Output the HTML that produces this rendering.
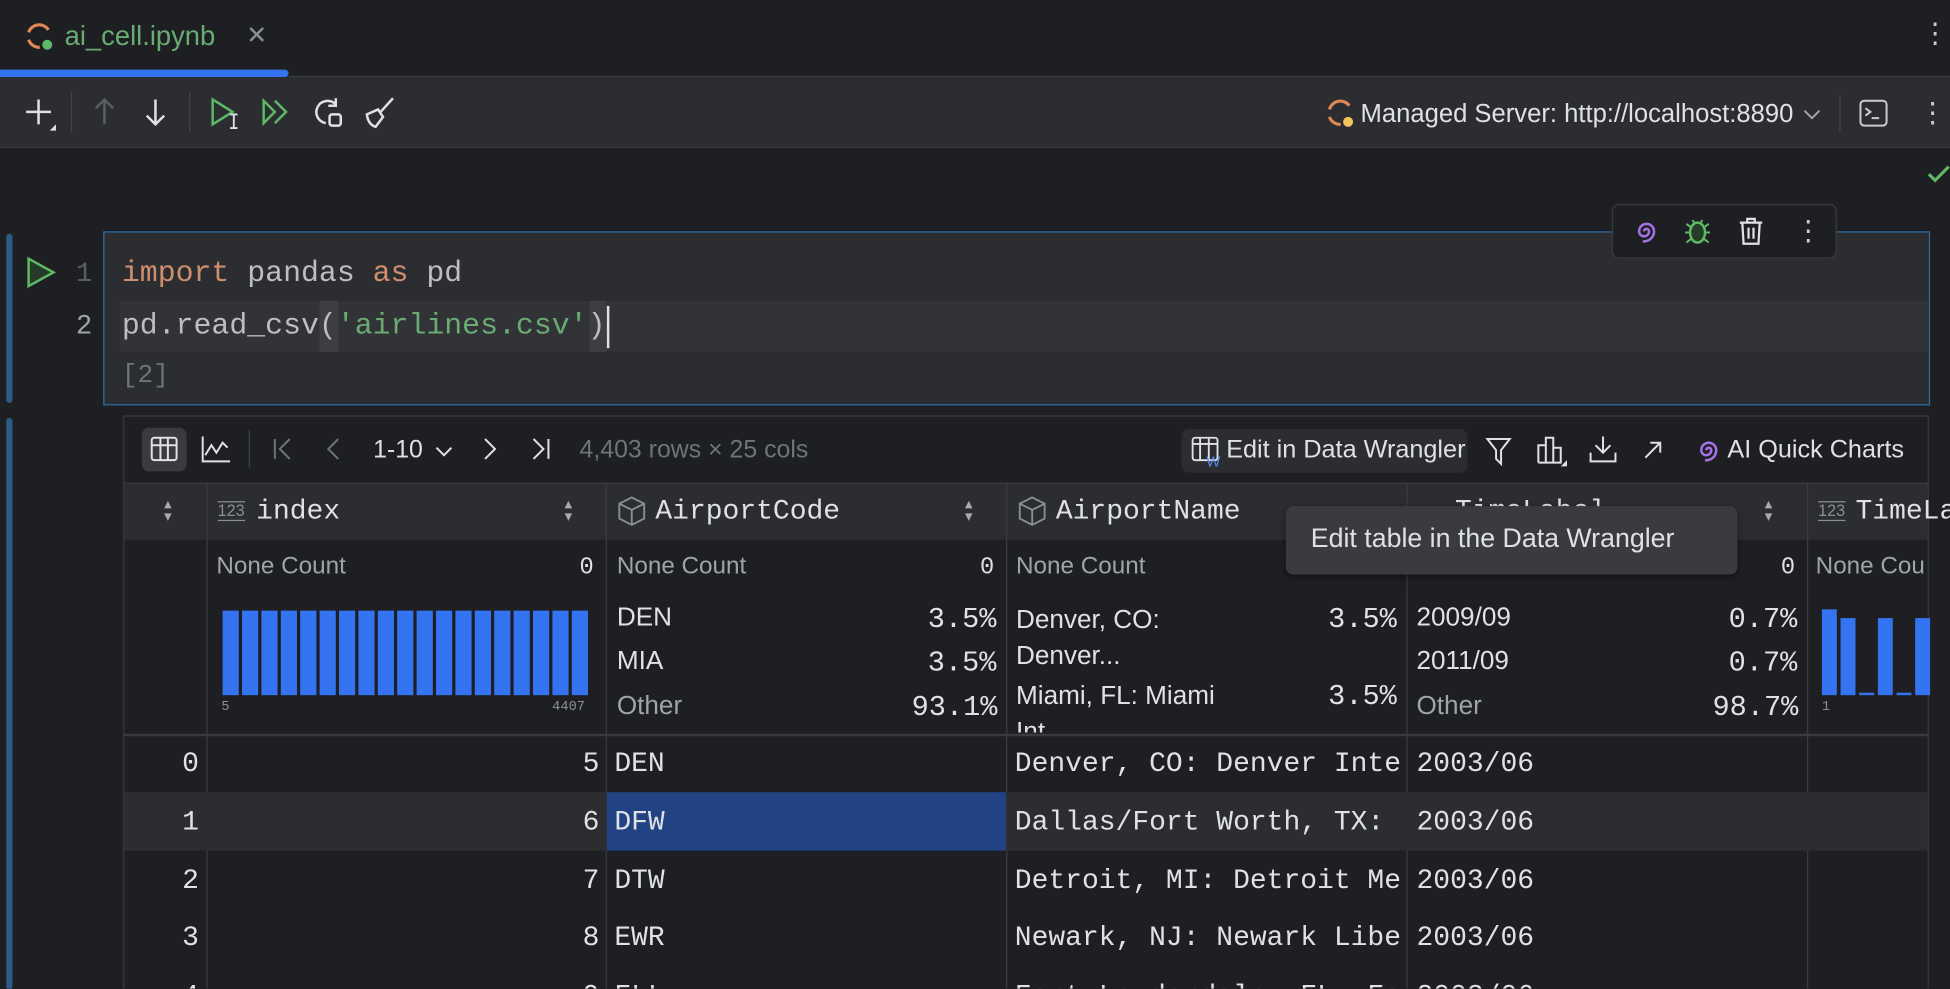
<!DOCTYPE html>
<html><head><meta charset="utf-8"><style>
html,body{margin:0;padding:0;width:1950px;height:988px;overflow:hidden;background:#1e1f22}
#w{position:absolute;left:0;top:0;width:1568px;height:795px;transform:scale(1.24362);transform-origin:0 0;font-family:"Liberation Sans",sans-serif;color:#dfe1e5;background:#1e1f22;overflow:hidden}
.a{position:absolute;white-space:nowrap}
.m{font-family:"Liberation Mono",monospace}
.t{font-size:22.5px}
svg{position:absolute;overflow:visible}
.vl{position:absolute;width:1px;background:#393b40}
.hl{position:absolute;height:1px;background:#393b40}
</style></head><body><div id="w">
<!-- tab bar -->
<svg style="left:20px;top:18px" width="24" height="24" viewBox="0 0 24 24"><path d="M19 6 A9 9 0 0 0 3 8" fill="none" stroke="#e08855" stroke-width="2.5"/><path d="M3 14 A9 9 0 0 0 12 20" fill="none" stroke="#e08855" stroke-width="2.5"/><circle cx="18" cy="18" r="4" fill="#5fb865"/></svg>
<div class="a" style="left:52px;top:16px;font-size:22px;color:#6aab73">ai_cell.ipynb</div>
<div class="a" style="left:198px;top:16px;font-size:20px;color:#8b8e94">✕</div>
<div class="a" style="left:1545px;top:14px;font-size:22px;color:#ccc">⋮</div>
<div class="a" style="left:0;top:56px;width:232px;height:6px;background:#3574f0;border-radius:0 3px 3px 0"></div>
<div class="hl" style="left:232px;top:61px;width:1336px;background:#393b40"></div>
<!-- toolbar -->
<div class="a" style="left:0;top:62px;width:1568px;height:56px;background:#2b2d30;border-bottom:1px solid #393b40"></div>
<svg style="left:20px;top:78px" width="26" height="26"><path d="M11 2V22M1 12H21" stroke="#dfe1e5" stroke-width="2"/><path d="M25 22L25 27L20 27Z" fill="#dfe1e5"/></svg>
<div class="vl" style="left:57px;top:74px;height:32px;background:#43454a"></div>
<svg style="left:74px;top:78px" width="20" height="24"><path d="M10 2V22M3 9L10 2L17 9" fill="none" stroke="#5a5d63" stroke-width="2"/></svg>
<svg style="left:115px;top:78px" width="20" height="24"><path d="M10 2V22M3 15L10 22L17 15" fill="none" stroke="#dfe1e5" stroke-width="2"/></svg>
<div class="vl" style="left:152px;top:74px;height:32px;background:#43454a"></div>
<svg style="left:169px;top:78px" width="26" height="26"><path d="M2 2L18 12L2 22Z" fill="none" stroke="#5fb865" stroke-width="2"/><path d="M19 14V25M16 14H22M16 25H22" stroke="#dfe1e5" stroke-width="1.5"/></svg>
<svg style="left:210px;top:79px" width="24" height="22"><path d="M2 2L11 11L2 20ZM11 2L20 11L11 20" fill="none" stroke="#5fb865" stroke-width="2"/></svg>
<svg style="left:252px;top:78px" width="26" height="26"><path d="M18 6A9 9 0 1 0 10 21" fill="none" stroke="#dfe1e5" stroke-width="2"/><path d="M18 1V7H12" fill="none" stroke="#dfe1e5" stroke-width="2"/><rect x="13" y="14" width="9" height="9" rx="2" fill="none" stroke="#dfe1e5" stroke-width="2"/></svg>
<svg style="left:292px;top:78px" width="26" height="26"><path d="M24 1L14 12M3 14L12 10L16 16L10 24Q4 22 3 14Z" fill="none" stroke="#dfe1e5" stroke-width="2"/></svg>
<svg style="left:1066px;top:80px" width="24" height="24"><path d="M19 5A9 9 0 0 0 3 8" fill="none" stroke="#e08855" stroke-width="2.5"/><path d="M3 14A9 9 0 0 0 12 20" fill="none" stroke="#e08855" stroke-width="2.5"/><circle cx="18" cy="18" r="4" fill="#f2c55c"/></svg>
<div class="a" style="left:1094px;top:80px;font-size:20.6px">Managed Server: http://localhost:8890</div>
<svg style="left:1450px;top:87px" width="14" height="10"><path d="M1 2L7 8L13 2" fill="none" stroke="#aaa" stroke-width="1.5"/></svg>
<div class="vl" style="left:1479px;top:76px;height:30px;background:#43454a"></div>
<svg style="left:1495px;top:80px" width="24" height="22"><rect x="1" y="1" width="21" height="20" rx="3" fill="none" stroke="#ccc" stroke-width="1.6"/><path d="M5 7L9 10L5 13M10 15H16" fill="none" stroke="#ccc" stroke-width="1.6"/></svg>
<div class="a" style="left:1543px;top:78px;font-size:22px;color:#ccc">⋮</div>
<svg style="left:1550px;top:132px" width="20" height="16"><path d="M1 8L6 13L17 2" fill="none" stroke="#5fb865" stroke-width="2.5"/></svg>
<!-- cell -->
<div class="a" style="left:5px;top:188px;width:5px;height:136px;background:#2e5a88;border-radius:3px"></div>
<div class="a" style="left:83px;top:186px;width:1467px;height:138px;background:#2b2d30;border:1px solid #2e6ca8"></div>
<div class="a" style="left:96px;top:242px;width:1454px;height:41px;background:#313337"></div>
<div class="a" style="left:257px;top:242px;width:15px;height:41px;background:#3c3e43"></div>
<div class="a" style="left:474px;top:242px;width:14px;height:41px;background:#3c3e43"></div>
<svg style="left:21px;top:206px" width="24" height="26"><path d="M2 2L22 13L2 24Z" fill="#253a27" stroke="#5fb865" stroke-width="2"/></svg>
<div class="a m" style="left:61px;top:208px;font-size:22px;color:#5a5d63">1</div>
<div class="a m" style="left:61px;top:250px;font-size:22px;color:#a0a3a8">2</div>
<div class="a m" style="left:98px;top:207px;font-size:24px;color:#bcbec4"><span style="color:#cf8e6d">import</span> pandas <span style="color:#cf8e6d">as</span> pd</div>
<div class="a m" style="left:98px;top:249px;font-size:24px;color:#bcbec4">pd.read_csv(<span style="color:#6aab73">'airlines.csv'</span>)</div>
<div class="a" style="left:488px;top:246px;width:2px;height:34px;background:#dfe1e5"></div>
<div class="a m" style="left:98px;top:291px;font-size:21px;color:#6f737a">[2]</div>
<!-- floating -->
<div class="a" style="left:1296px;top:164px;width:179px;height:42px;background:#1e1f22;border:1.5px solid #393b40;border-radius:6px"></div>
<svg style="left:1313px;top:176px" width="22" height="20"><path d="M11 10m-2 0a2 2 0 1 1 4 0a4 4 0 1 1-8 0a6 6 0 1 1 12 0a8 8 0 0 1-9 8" fill="none" stroke="#a571e6" stroke-width="2"/></svg>
<svg style="left:1353px;top:174px" width="24" height="24"><ellipse cx="12" cy="13" rx="6" ry="8" fill="#253a27" stroke="#5fb865" stroke-width="2"/><path d="M2 13H6M18 13H22M3 6L7 9M21 6L17 9M3 21L7 18M21 21L17 18M8 3L10 6M16 3L14 6" stroke="#5fb865" stroke-width="1.6"/></svg>
<svg style="left:1397px;top:174px" width="22" height="24"><path d="M2 5H20M8 5V2H14V5M4 5L5 22H17L18 5M9 9V18M13 9V18" fill="none" stroke="#dfe1e5" stroke-width="1.8"/></svg>
<div class="a" style="left:1443px;top:173px;font-size:22px;color:#ccc">⋮</div>
<!-- output -->
<div class="a" style="left:5px;top:336px;width:5px;height:460px;background:#2e5a88;border-radius:3px"></div>
<div class="a" style="left:99px;top:334px;width:1451px;height:470px;border:1.5px solid #393b40;border-right:none"></div>
<div class="vl" style="left:1550px;top:334px;height:470px"></div>
<div class="a" style="left:114px;top:344px;width:36px;height:35px;background:#393b40;border-radius:6px"></div>
<svg style="left:121px;top:351px" width="22" height="20"><rect x="1" y="1" width="20" height="18" rx="2" fill="none" stroke="#dfe1e5" stroke-width="1.6"/><path d="M1 7H21M8 1V19M14 1V19" stroke="#dfe1e5" stroke-width="1.6"/></svg>
<svg style="left:162px;top:350px" width="24" height="22"><path d="M1 1V21H23M3 16L8 8L12 14L17 6L21 10" fill="none" stroke="#dfe1e5" stroke-width="1.6"/></svg>
<div class="vl" style="left:200px;top:346px;height:30px;background:#43454a"></div>
<svg style="left:219px;top:352px" width="16" height="18"><path d="M2 1V17M14 1L6 9L14 17" fill="none" stroke="#6f737a" stroke-width="1.6"/></svg>
<svg style="left:262px;top:352px" width="12" height="18"><path d="M10 1L2 9L10 17" fill="none" stroke="#6f737a" stroke-width="1.6"/></svg>
<div class="a" style="left:300px;top:351px;font-size:20px">1-10</div>
<svg style="left:350px;top:358px" width="14" height="10"><path d="M1 2L7 8L13 2" fill="none" stroke="#dfe1e5" stroke-width="1.6"/></svg>
<svg style="left:388px;top:352px" width="12" height="18"><path d="M2 1L10 9L2 17" fill="none" stroke="#dfe1e5" stroke-width="1.6"/></svg>
<svg style="left:427px;top:352px" width="16" height="18"><path d="M2 1L10 9L2 17M14 1V17" fill="none" stroke="#dfe1e5" stroke-width="1.6"/></svg>
<div class="a" style="left:466px;top:351px;font-size:20px;color:#6f737a">4,403 rows × 25 cols</div>
<div class="a" style="left:950px;top:345px;width:230px;height:35px;background:#2b2d30;border-radius:6px"></div>
<svg style="left:958px;top:351px" width="26" height="24"><rect x="1" y="1" width="20" height="18" rx="2" fill="none" stroke="#dfe1e5" stroke-width="1.5"/><path d="M1 6H21M7 1V19M14 1V19" stroke="#dfe1e5" stroke-width="1.5"/><text x="12" y="24" font-size="12" fill="#548af7" font-family="Liberation Sans">W</text></svg>
<div class="a" style="left:986px;top:351px;font-size:20.3px">Edit in Data Wrangler</div>
<svg style="left:1195px;top:352px" width="20" height="22"><path d="M1 1H19L12 10V21L8 17V10Z" fill="none" stroke="#dfe1e5" stroke-width="1.6"/></svg>
<svg style="left:1236px;top:350px" width="24" height="26"><path d="M1 22V8H7V22M7 22V2H13V22M13 22V10H19V22H1" fill="none" stroke="#dfe1e5" stroke-width="1.6"/><path d="M24 20V25H19Z" fill="#dfe1e5"/></svg>
<svg style="left:1278px;top:350px" width="22" height="22"><path d="M11 1V14M5 8L11 14L17 8M1 14V21H21V14" fill="none" stroke="#dfe1e5" stroke-width="1.6"/></svg>
<svg style="left:1322px;top:355px" width="14" height="14"><path d="M1 13L13 1M5 1H13V9" fill="none" stroke="#dfe1e5" stroke-width="1.6"/></svg>
<svg style="left:1363px;top:352px" width="22" height="22"><path d="M11 10m-2 0a2 2 0 1 1 4 0a4 4 0 1 1-8 0a6 6 0 1 1 12 0a8 8 0 0 1-9 8" fill="none" stroke="#a571e6" stroke-width="2"/></svg>
<div class="a" style="left:1389px;top:351px;font-size:20.3px">AI Quick Charts</div>
<!-- header -->
<div class="a" style="left:100px;top:388px;width:1450px;height:46px;background:#2b2d30"></div>
<div class="hl" style="left:100px;top:388px;width:1450px"></div>
<div class="hl" style="left:100px;top:590px;width:1450px;height:2px"></div>
<div class="vl" style="left:166px;top:388px;height:410px"></div>
<div class="vl" style="left:487px;top:388px;height:410px"></div>
<div class="vl" style="left:809px;top:388px;height:410px"></div>
<div class="vl" style="left:1131px;top:388px;height:410px"></div>
<div class="vl" style="left:1453px;top:388px;height:410px"></div>
<div class="a" style="left:132px;top:400px;font-size:12px;line-height:10px;color:#aaa">▴<br>▾</div>
<div class="a" style="left:454px;top:400px;font-size:12px;line-height:10px;color:#aaa">▴<br>▾</div>
<div class="a" style="left:776px;top:400px;font-size:12px;line-height:10px;color:#aaa">▴<br>▾</div>
<div class="a" style="left:1419px;top:400px;font-size:12px;line-height:10px;color:#aaa">▴<br>▾</div>
<div class="a" style="left:175px;top:403px;font-size:13px;color:#8b8e94;border-top:1px solid #8b8e94;border-bottom:1px solid #8b8e94;line-height:14px">123</div>
<div class="a m t" style="left:206px;top:398px">index</div>
<svg style="left:497px;top:399px" width="22" height="24"><path d="M11 1L21 6V18L11 23L1 18V6ZM1 6L11 11L21 6M11 11V23" fill="none" stroke="#8b8e94" stroke-width="1.5"/></svg>
<div class="a m t" style="left:527px;top:398px">AirportCode</div>
<svg style="left:819px;top:399px" width="22" height="24"><path d="M11 1L21 6V18L11 23L1 18V6ZM1 6L11 11L21 6M11 11V23" fill="none" stroke="#8b8e94" stroke-width="1.5"/></svg>
<div class="a m t" style="left:849px;top:398px">AirportName</div>
<div class="a m t" style="left:1170px;top:398px">TimeLabel</div>
<div class="a" style="left:1462px;top:403px;font-size:13px;color:#8b8e94;border-top:1px solid #8b8e94;border-bottom:1px solid #8b8e94;line-height:14px">123</div>
<div class="a m t" style="left:1492px;top:398px">TimeLabel</div>
<!-- stats -->
<div class="a" style="left:174px;top:444px;font-size:19.5px;color:#a0a3a8">None Count</div><div class="a m" style="left:466px;top:445px;font-size:19px">0</div>
<div class="a" style="left:496px;top:444px;font-size:19.5px;color:#a0a3a8">None Count</div><div class="a m" style="left:788px;top:445px;font-size:19px">0</div>
<div class="a" style="left:817px;top:444px;font-size:19.5px;color:#a0a3a8">None Count</div>
<div class="a m" style="left:1432px;top:445px;font-size:19px">0</div>
<div class="a" style="left:1460px;top:444px;font-size:19.5px;color:#a0a3a8">None Cou</div>
<svg style="left:179px;top:491px" width="296" height="70"><g fill="#3574f0">
<rect x="0" width="13" height="68"/><rect x="15.6" width="13" height="68"/><rect x="31.2" width="13" height="68"/><rect x="46.8" width="13" height="68"/><rect x="62.4" width="13" height="68"/><rect x="78" width="13" height="68"/><rect x="93.6" width="13" height="68"/><rect x="109.2" width="13" height="68"/><rect x="124.8" width="13" height="68"/><rect x="140.4" width="13" height="68"/><rect x="156" width="13" height="68"/><rect x="171.6" width="13" height="68"/><rect x="187.2" width="13" height="68"/><rect x="202.8" width="13" height="68"/><rect x="218.4" width="13" height="68"/><rect x="234" width="13" height="68"/><rect x="249.6" width="13" height="68"/><rect x="265.2" width="13" height="68"/><rect x="280.8" width="13" height="68"/></g></svg>
<div class="a m" style="left:178px;top:563px;font-size:11px;color:#8b8e94">5</div>
<div class="a m" style="left:444px;top:563px;font-size:11px;color:#8b8e94">4407</div>
<div class="a" style="left:496px;top:485px;font-size:21px">DEN</div><div class="a m" style="left:746px;top:485px;font-size:23px">3.5%</div>
<div class="a" style="left:496px;top:520px;font-size:21px">MIA</div><div class="a m" style="left:746px;top:520px;font-size:23px">3.5%</div>
<div class="a" style="left:496px;top:556px;font-size:21px;color:#a0a3a8">Other</div><div class="a m" style="left:733px;top:556px;font-size:23px">93.1%</div>
<div class="a" style="left:817px;top:484px;font-size:21px;line-height:29px">Denver, CO:<br>Denver...</div><div class="a m" style="left:1068px;top:485px;font-size:23px">3.5%</div>
<div class="a" style="left:817px;top:545px;font-size:21px;line-height:29px;height:44px;overflow:hidden">Miami, FL: Miami<br>Int</div><div class="a m" style="left:1068px;top:547px;font-size:23px">3.5%</div>
<div class="a" style="left:1139px;top:485px;font-size:21px">2009/09</div><div class="a m" style="left:1390px;top:485px;font-size:23px">0.7%</div>
<div class="a" style="left:1139px;top:520px;font-size:21px">2011/09</div><div class="a m" style="left:1390px;top:520px;font-size:23px">0.7%</div>
<div class="a" style="left:1139px;top:556px;font-size:21px;color:#a0a3a8">Other</div><div class="a m" style="left:1377px;top:556px;font-size:23px">98.7%</div>
<svg style="left:1465px;top:490px" width="90" height="70"><g fill="#3574f0"><rect x="0" y="0" width="12" height="69"/><rect x="15" y="7" width="12" height="62"/><rect x="30" y="67" width="12" height="2"/><rect x="45" y="7" width="12" height="62"/><rect x="60" y="67" width="12" height="2"/><rect x="75" y="7" width="12" height="62"/></g></svg>
<div class="a m" style="left:1465px;top:563px;font-size:11px;color:#8b8e94">1</div>
<!-- rows -->
<div class="a" style="left:100px;top:637px;width:1450px;height:47px;background:#2b2d30"></div>
<div class="a" style="left:488px;top:637px;width:321px;height:47px;background:#214283"></div>
<div class="a m t" style="left:100px;top:601px;width:60px;text-align:right">0</div>
<div class="a m t" style="left:100px;top:648px;width:60px;text-align:right">1</div>
<div class="a m t" style="left:100px;top:695px;width:60px;text-align:right">2</div>
<div class="a m t" style="left:100px;top:741px;width:60px;text-align:right">3</div>
<div class="a m t" style="left:100px;top:788px;width:60px;text-align:right">4</div>
<div class="a m t" style="left:170px;top:601px;width:312px;text-align:right">5</div>
<div class="a m t" style="left:170px;top:648px;width:312px;text-align:right">6</div>
<div class="a m t" style="left:170px;top:695px;width:312px;text-align:right">7</div>
<div class="a m t" style="left:170px;top:741px;width:312px;text-align:right">8</div>
<div class="a m t" style="left:170px;top:788px;width:312px;text-align:right">9</div>
<div class="a m t" style="left:494px;top:601px">DEN</div>
<div class="a m t" style="left:494px;top:648px">DFW</div>
<div class="a m t" style="left:494px;top:695px">DTW</div>
<div class="a m t" style="left:494px;top:741px">EWR</div>
<div class="a m t" style="left:494px;top:788px">FLL</div>
<div class="a m t" style="left:816px;top:601px;width:312px;overflow:hidden">Denver, CO: Denver Inte</div>
<div class="a m t" style="left:816px;top:648px;width:312px;overflow:hidden">Dallas/Fort Worth, TX: </div>
<div class="a m t" style="left:816px;top:695px;width:312px;overflow:hidden">Detroit, MI: Detroit Me</div>
<div class="a m t" style="left:816px;top:741px;width:312px;overflow:hidden">Newark, NJ: Newark Libe</div>
<div class="a m t" style="left:816px;top:788px;width:312px;overflow:hidden">Fort Lauderdale, FL: Fo</div>
<div class="a m t" style="left:1139px;top:601px">2003/06</div>
<div class="a m t" style="left:1139px;top:648px">2003/06</div>
<div class="a m t" style="left:1139px;top:695px">2003/06</div>
<div class="a m t" style="left:1139px;top:741px">2003/06</div>
<div class="a m t" style="left:1139px;top:788px">2003/06</div>
<!-- tooltip -->
<div class="a" style="left:1034px;top:407px;width:363px;height:55px;background:#393b40;border-radius:6px;box-shadow:0 2px 6px rgba(0,0,0,.4)"></div>
<div class="a" style="left:1054px;top:421px;font-size:21.5px">Edit table in the Data Wrangler</div>
</div></body></html>
